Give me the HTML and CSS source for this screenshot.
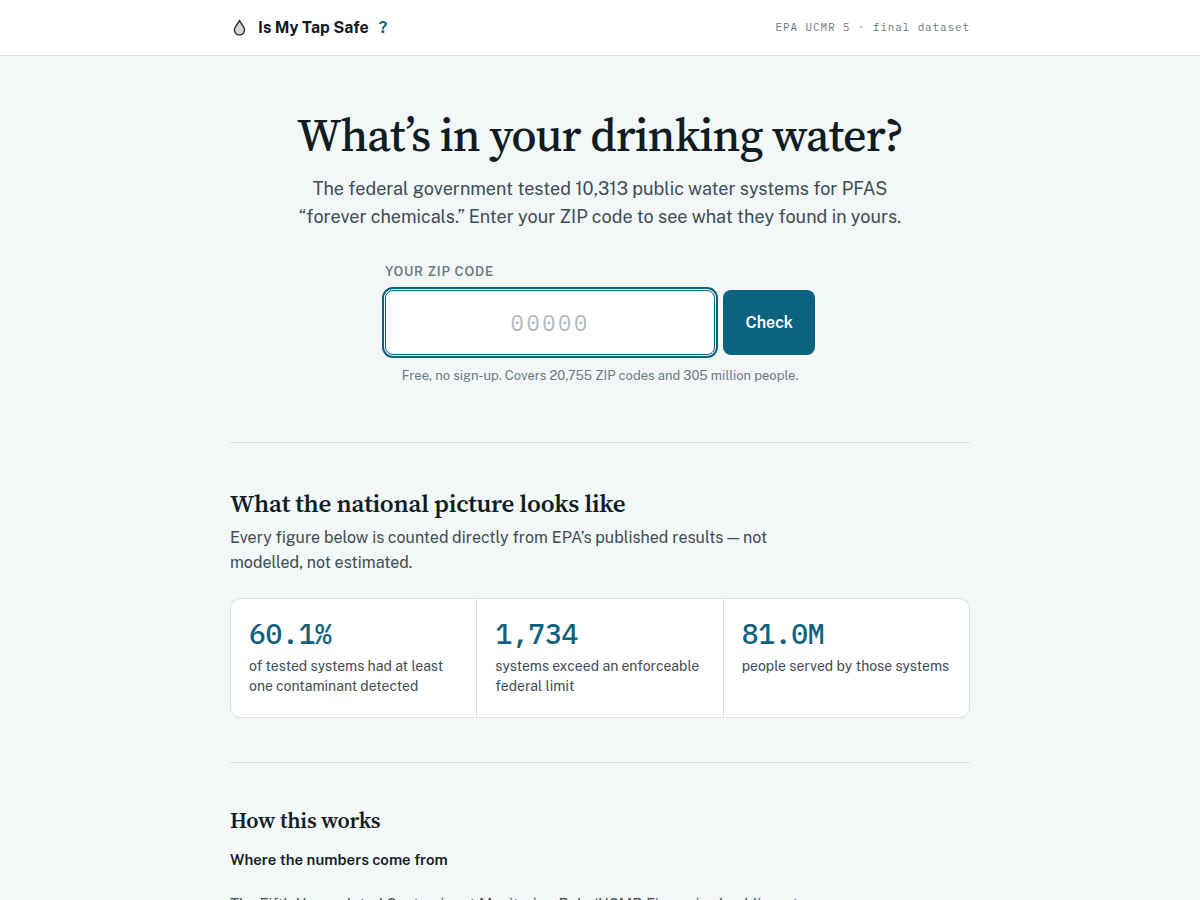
FILE: index.html
```html
<!DOCTYPE html>
<html lang="en">
<head>
    <meta charset="UTF-8">
    <meta name="viewport" content="width=device-width, initial-scale=1.0">
    <title>Is My Tap Safe?</title>
    <link rel="stylesheet" href="styles.css">
</head>
<body>
    <header class="site-header">
        <div class="wrap header-inner">
            <a href="/" class="brand">
                <svg class="drop" viewBox="0 0 18 18" aria-hidden="true">
                    <path d="M9.5 1.2C8.7 4 4.4 7.6 4.4 11a5.1 4.9 0 0 0 10.2 0C14.6 7.6 10.3 4 9.5 1.2z" fill="#d3d7d9" stroke="#2a3338" stroke-width="1.4" stroke-linejoin="round"/>
                </svg>
                <span>Is My Tap Safe</span>
                <span class="brand-mark">?</span>
            </a>
            <span class="dataset">EPA UCMR 5 · final dataset</span>
        </div>
    </header>

    <main class="wrap">
        <section class="hero">
            <h1>What’s in your drinking water?</h1>
            <p class="lead">The federal government tested 10,313 public water systems for PFAS “forever chemicals.” Enter your ZIP code to see what they found in yours.</p>

            <form class="zip-form">
                <label for="zip">Your ZIP code</label>
                <div class="zip-row">
                    <input type="text" id="zip" name="zip" inputmode="numeric" maxlength="5" placeholder="00000" autocomplete="postal-code">
                    <button type="submit">Check</button>
                </div>
                <p class="hint">Free, no sign-up. Covers 20,755 ZIP codes and 305 million people.</p>
            </form>
        </section>

        <section class="national">
            <h2>What the national picture looks like</h2>
            <p class="intro">Every figure below is counted directly from EPA’s published results — not modelled, not estimated.</p>

            <div class="stats">
                <div class="stat">
                    <div class="stat-value">60.1%</div>
                    <div class="stat-label">of tested systems had at least one contaminant detected</div>
                </div>
                <div class="stat">
                    <div class="stat-value">1,734</div>
                    <div class="stat-label">systems exceed an enforceable federal limit</div>
                </div>
                <div class="stat">
                    <div class="stat-value">81.0M</div>
                    <div class="stat-label">people served by those systems</div>
                </div>
            </div>
        </section>

        <section class="how">
            <h2>How this works</h2>
            <h3>Where the numbers come from</h3>
            <p>The Fifth Unregulated Contaminant Monitoring Rule (UCMR 5) required public water</p>
        </section>
    </main>
</body>
</html>
```
FILE: styles.css
```css
:root {
    --ink: #0f1c22;
    --body: #3d4c53;
    --muted: #6b7a80;
    --line: #d9e0e3;
    --accent: #0c637f;
    --sans: "Public Sans", Inter, sans-serif;
    --serif: "Source Serif 4", "Liberation Serif", serif;
    --mono: "IBM Plex Mono", "Liberation Mono", monospace;
}

* {
    box-sizing: border-box;
}

body {
    margin: 0;
    background: #f3f7f8;
    color: var(--ink);
    font-family: var(--sans);
    font-size: 16px;
    line-height: 27px;
}

h1, h2, h3, p {
    margin: 0;
}

.wrap {
    max-width: 780px;
    margin: 0 auto;
    padding: 0 20px;
}

.site-header {
    background: #fff;
    border-bottom: 1px solid var(--line);
}

.header-inner {
    display: flex;
    align-items: center;
    justify-content: space-between;
    padding-top: 14px;
    padding-bottom: 14px;
}

.brand {
    display: flex;
    align-items: center;
    gap: 10px;
    color: var(--ink);
    font-size: 16px;
    font-weight: 700;
    text-decoration: none;
}

.drop {
    width: 18px;
    height: 18px;
}

.brand-mark {
    color: var(--accent);
}

.dataset {
    font-family: var(--mono);
    font-size: 11px;
    letter-spacing: 0.08em;
    color: var(--muted);
}

/* Hero */
.hero {
    padding: 52px 0 56px;
    text-align: center;
}

h1, h2 {
    font-family: var(--serif);
    font-weight: 600;
    letter-spacing: -0.01em;
}

h1 {
    font-size: 46px;
    line-height: 54px;
    font-weight: 500;
    letter-spacing: -0.02em;
}

.lead {
    max-width: 620px;
    margin: 13px auto 0;
    font-size: 18px;
    line-height: 28px;
    color: var(--body);
}

.zip-form {
    max-width: 430px;
    margin: 31px auto 0;
}

.zip-form label {
    display: block;
    margin-bottom: 8px;
    text-align: left;
    font-size: 13px;
    line-height: 20px;
    font-weight: 600;
    letter-spacing: 0.06em;
    text-transform: uppercase;
    color: var(--muted);
}

.zip-row {
    display: flex;
    gap: 8px;
}

.zip-row input {
    flex: 1;
    min-width: 0;
    height: 65px;
    padding: 0 16px;
    border: 1px solid var(--accent);
    border-radius: 8px;
    outline: 2px solid var(--accent);
    outline-offset: 1px;
    background: #fff;
    color: var(--ink);
    font-family: var(--mono);
    font-size: 22px;
    letter-spacing: 0.12em;
    text-align: center;
}

.zip-row input::placeholder {
    color: #b0b8bc;
}

.zip-row button {
    padding: 0 22px;
    border: none;
    border-radius: 8px;
    background: var(--accent);
    color: #fff;
    font-family: var(--sans);
    font-size: 16px;
    font-weight: 600;
    cursor: pointer;
}

.hint {
    margin-top: 10px;
    font-size: 13px;
    line-height: 21px;
    color: var(--muted);
}

/* National figures */
.national,
.how {
    padding: 44px 0;
    border-top: 1px solid var(--line);
}

.national h2 {
    font-size: 25px;
    line-height: 32px;
}

.intro {
    max-width: 560px;
    margin-top: 6px;
    font-size: 16px;
    line-height: 25px;
    color: var(--body);
}

.stats {
    display: grid;
    grid-template-columns: repeat(3, 1fr);
    gap: 1px;
    margin-top: 23px;
    border: 1px solid var(--line);
    border-radius: 10px;
    background: var(--line);
    overflow: hidden;
}

.stat {
    padding: 17px 18px 21px;
    background: #fff;
}

.stat-value {
    font-family: var(--mono);
    font-size: 28px;
    line-height: 36px;
    font-weight: 500;
    letter-spacing: -0.01em;
    color: var(--accent);
}

.stat-label {
    margin-top: 4px;
    font-size: 14px;
    line-height: 20px;
    color: var(--body);
}

/* Method notes */
.how h2 {
    font-size: 22px;
    line-height: 26px;
}

.how h3 {
    margin-top: 15px;
    font-size: 15px;
    line-height: 24px;
    font-weight: 600;
}

.how p {
    max-width: 620px;
    margin-top: 19px;
    font-size: 15px;
    line-height: 25px;
    color: var(--body);
}

@media (max-width: 600px) {
    h1 {
        font-size: 36px;
        line-height: 42px;
    }

    .stats {
        grid-template-columns: 1fr;
    }
}
```
